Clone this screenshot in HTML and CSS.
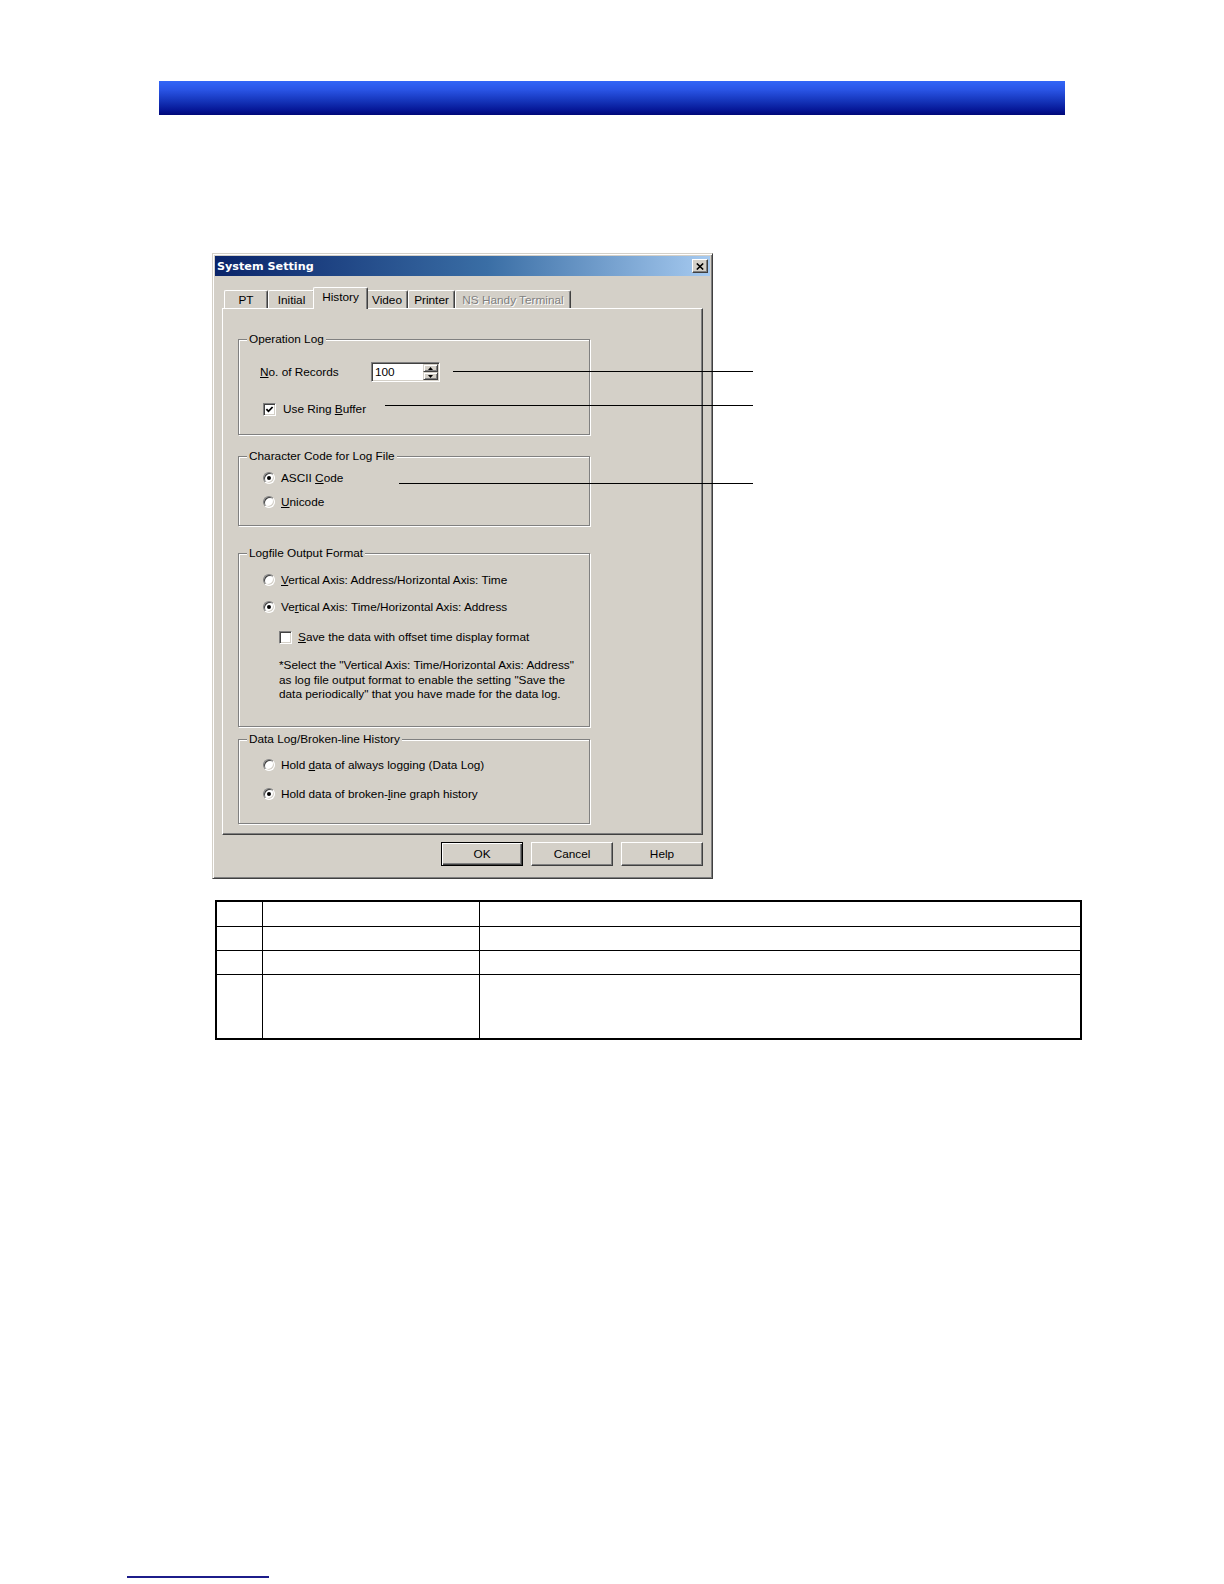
FILE: index.html
```html
<!DOCTYPE html>
<html>
<head>
<meta charset="utf-8">
<title>System Setting - History</title>
<link rel="stylesheet" href="styles.css">
</head>
<body>
<div class="page">
  <div class="topbar"></div>

  <div class="figure">
    <div class="dialog">
      <div class="titlebar">
        <span class="title">System Setting</span>
        <span class="close"><svg width="8" height="7" viewBox="0 0 8 7"><path d="M0.8 0.5 L7.2 6.5 M7.2 0.5 L0.8 6.5" stroke="#000" stroke-width="1.6" fill="none"/></svg></span>
      </div>

      <div class="tabs">
        <div class="tab t-pt">PT</div>
        <div class="tab t-init">Initial</div>
        <div class="tab t-hist selected">History</div>
        <div class="tab t-video">Video</div>
        <div class="tab t-print">Printer</div>
        <div class="tab t-ns disabled">NS Handy Terminal</div>
      </div>

      <div class="panel">
        <div class="group g-op">
          <span class="legend">Operation Log</span>
          <div class="row">
            <span class="lbl"><u>N</u>o. of Records</span>
            <div class="spin">
              <span class="spin-val">100</span>
              <div class="spin-btns">
                <span class="spin-btn"><svg width="5" height="3" viewBox="0 0 5 3"><path d="M2.5 0 L5 3 L0 3 Z" fill="#000"/></svg></span>
                <span class="spin-btn"><svg width="5" height="3" viewBox="0 0 5 3"><path d="M0 0 L5 0 L2.5 3 Z" fill="#000"/></svg></span>
              </div>
            </div>
          </div>
          <div class="row r-ring">
            <span class="check op-check"><svg width="9" height="9" viewBox="0 0 9 9"><path d="M1.4 4.1 L3.5 6.3 L7.6 2" stroke="#000" stroke-width="1.8" fill="none"/></svg></span>
            <span class="txt-check">Use Ring <u>B</u>uffer</span>
          </div>
        </div>

        <div class="group g-char">
          <span class="legend">Character Code for Log File</span>
          <div class="row">
            <span class="radio on"></span><span class="txt-radio">ASCII <u>C</u>ode</span>
          </div>
          <div class="row r-uni">
            <span class="radio"></span><span class="txt-radio"><u>U</u>nicode</span>
          </div>
        </div>

        <div class="group g-log">
          <span class="legend">Logfile Output Format</span>
          <div class="row">
            <span class="radio"></span><span class="txt-radio"><u>V</u>ertical Axis: Address/Horizontal Axis: Time</span>
          </div>
          <div class="row r-log2">
            <span class="radio on"></span><span class="txt-radio">Ve<u>r</u>tical Axis: Time/Horizontal Axis: Address</span>
          </div>
          <div class="row r-log3">
            <span class="check log-check"></span><span class="txt-radio"><u>S</u>ave the data with offset time display format</span>
          </div>
          <p class="note">*Select the "Vertical Axis: Time/Horizontal Axis: Address"<br>as log file output format to enable the setting "Save the<br>data periodically" that you have made for the data log.</p>
        </div>

        <div class="group g-data">
          <span class="legend">Data Log/Broken-line History</span>
          <div class="row">
            <span class="radio"></span><span class="txt-radio">Hold <u>d</u>ata of always logging (Data Log)</span>
          </div>
          <div class="row r-data2">
            <span class="radio on"></span><span class="txt-radio">Hold data of broken-<u>l</u>ine graph history</span>
          </div>
        </div>
      </div>

      <div class="buttons">
        <div class="btn default">OK</div>
        <div class="btn">Cancel</div>
        <div class="btn">Help</div>
      </div>
    </div>

    <div class="callout c1"></div>
    <div class="callout c2"></div>
    <div class="callout c3"></div>
  </div>

  <table class="spec">
    <colgroup><col class="c-no"><col class="c-item"><col class="c-desc"></colgroup>
    <tr class="r1"><td></td><td></td><td></td></tr>
    <tr class="r2"><td></td><td></td><td></td></tr>
    <tr class="r3"><td></td><td></td><td></td></tr>
    <tr class="r4"><td></td><td></td><td></td></tr>
  </table>

  <div class="footline"></div>
</div>
</body>
</html>
```

FILE: styles.css
```css
* { box-sizing: border-box; }

html, body {
  margin: 0;
  padding: 0;
  background: #fff;
}

body {
  font-family: "Liberation Sans", Arial, sans-serif;
  color: #000;
}

.page {
  width: 1224px;
  height: 1584px;
  padding-top: 81px;
  overflow: hidden;
}

.topbar {
  margin-left: 159px;
  width: 906px;
  height: 34px;
  background: linear-gradient(180deg, #3266f7 0%, #2a55e6 25%, #1433b8 60%, #061797 85%, #000878 100%);
}

/* ---------- figure ---------- */
.figure {
  position: relative;
  margin: 138px 0 0 212px;
  width: 545px;
}

.dialog {
  width: 501px;
  height: 626px;
  background: #d4d0c8;
  border: 1px solid;
  border-color: #d4d0c8 #404040 #404040 #d4d0c8;
  box-shadow: inset 1px 1px #fff, inset -1px -1px #808080;
  padding: 2px;
  display: flex;
  flex-direction: column;
}

.titlebar {
  height: 20px;
  background: linear-gradient(90deg, #0a246a 0%, #3a6ea5 55%, #a6caf0 100%);
  display: flex;
  align-items: center;
  justify-content: space-between;
  padding: 0 2px 0 2px;
}

.title {
  color: #fff;
  font-family: "DejaVu Sans", Verdana, sans-serif;
  font-weight: bold;
  font-size: 11.2px;
}

.close {
  width: 16px;
  height: 14px;
  background: #d4d0c8;
  border: 1px solid;
  border-color: #fff #404040 #404040 #fff;
  box-shadow: inset -1px -1px #808080;
  display: flex;
  align-items: center;
  justify-content: center;
}

/* ---------- tabs ---------- */
.tabs {
  position: relative;
  z-index: 1;
  margin: 10px 0 0 7px;
  height: 22px;
  display: flex;
  align-items: flex-end;
  padding-left: 2px;
}

.tab {
  height: 18px;
  background: #d4d0c8;
  border: 1px solid;
  border-bottom: none;
  border-color: #fff #404040 #404040 #fff;
  box-shadow: inset -1px 0 #808080;
  border-radius: 2px 2px 0 0;
  font-size: 11.8px;
  display: flex;
  align-items: center;
  justify-content: center;
  padding-top: 1px;
  white-space: nowrap;
}

.t-pt { width: 44px; }
.t-init { width: 47px; }
.t-video { width: 42px; }
.t-print { width: 47px; }
.t-ns { width: 116px; }

.tab.selected {
  position: relative;
  z-index: 2;
  width: 55px;
  height: 22px;
  margin: 0 -2px -1px -2px;
  padding-top: 0;
  padding-bottom: 3px;
}

.tab.disabled {
  color: #808080;
  text-shadow: 1px 1px #fff;
}

/* ---------- panel ---------- */
.panel {
  margin-left: 7px;
  width: 481px;
  height: 527px;
  border: 1px solid;
  border-color: #fff #404040 #404040 #fff;
  box-shadow: inset -1px -1px #808080;
  padding: 30px 0 0 15px;
}

.group {
  position: relative;
  width: 352px;
  border: 1px solid #808080;
  box-shadow: inset 1px 1px #fff, 1px 1px #fff;
  padding-left: 21px;
}

.legend {
  position: absolute;
  top: -8px;
  left: 8px;
  padding: 0 2px;
  background: #d4d0c8;
  font-size: 11.8px;
  line-height: 14px;
  white-space: nowrap;
}

.row {
  height: 20px;
  display: flex;
  align-items: center;
  font-size: 11.8px;
  white-space: nowrap;
}

.g-op { height: 96px; padding-top: 22px; }
.r-ring { margin-top: 17px; }

.g-char { height: 70px; margin-top: 21px; padding-top: 11px; }
.r-uni { margin-top: 4px; }

.g-log { height: 174px; margin-top: 27px; padding-top: 16px; }
.r-log2 { margin-top: 7px; }
.r-log3 { margin-top: 10px; }

.g-data { height: 85px; margin-top: 12px; padding-top: 15px; }
.r-data2 { margin-top: 9px; }

.lbl { width: 111px; }

.spin {
  width: 69px;
  height: 20px;
  background: #fff;
  border: 1px solid;
  border-color: #808080 #fff #fff #808080;
  box-shadow: inset 1px 1px #404040, inset -1px -1px #d4d0c8;
  display: flex;
  align-items: center;
  justify-content: space-between;
  padding: 1px;
}

.spin-val {
  padding-left: 2px;
  font-size: 11.8px;
}

.spin-btns {
  width: 15px;
  height: 16px;
  display: flex;
  flex-direction: column;
}

.spin-btn {
  flex: 1;
  background: #d4d0c8;
  border: 1px solid;
  border-color: #d4d0c8 #404040 #404040 #d4d0c8;
  box-shadow: inset 1px 1px #fff, inset -1px -1px #808080;
  display: flex;
  align-items: center;
  justify-content: center;
}

.radio {
  position: relative;
  flex: none;
  width: 12px;
  height: 12px;
  margin-left: 3px;
  border-radius: 50%;
  background: #fff;
  border: 1px solid;
  border-color: #808080 #fff #fff #808080;
  box-shadow: inset 1px 1px #404040, inset -1px -1px #d4d0c8;
}

.radio.on::after {
  content: "";
  position: absolute;
  left: 3px;
  top: 3px;
  width: 4px;
  height: 4px;
  border-radius: 50%;
  background: #000;
}

.txt-radio { margin-left: 6px; }
.txt-check { margin-left: 7px; }

.check {
  flex: none;
  width: 13px;
  height: 13px;
  background: #fff;
  border: 1px solid;
  border-color: #808080 #fff #fff #808080;
  box-shadow: inset 1px 1px #404040, inset -1px -1px #d4d0c8;
  display: flex;
  align-items: center;
  justify-content: center;
}

.op-check { margin-left: 3px; }
.log-check { margin-left: 19px; }

.note {
  margin: 11px 0 0 19px;
  font-size: 11.8px;
  line-height: 14.5px;
  white-space: nowrap;
}

/* ---------- buttons ---------- */
.buttons {
  display: flex;
  justify-content: flex-end;
  gap: 8px;
  margin-top: 7px;
  padding-right: 7px;
}

.btn {
  width: 82px;
  height: 24px;
  border: 1px solid;
  border-color: #fff #404040 #404040 #fff;
  box-shadow: inset -1px -1px #808080;
  font-size: 11.8px;
  display: flex;
  align-items: center;
  justify-content: center;
}

.btn.default {
  border-color: #000;
  box-shadow: inset 1px 1px #fff, inset -1px -1px #404040, inset -2px -2px #808080;
}

/* ---------- callout lines ---------- */
.callout {
  position: absolute;
  height: 1px;
  background: #000;
}

.c1 { left: 241px; top: 118px; width: 300px; }
.c2 { left: 173px; top: 152px; width: 368px; }
.c3 { left: 187px; top: 230px; width: 354px; }

/* ---------- table ---------- */
.spec {
  margin: 21px 0 0 215px;
  width: 865px;
  border-collapse: collapse;
  border: 2px solid #000;
  table-layout: fixed;
}

.spec td {
  border: 1px solid #000;
  padding: 0;
}

.c-no { width: 46px; }
.c-item { width: 217px; }
.c-desc { width: 602px; }

.spec .r1 td { height: 25px; }
.spec .r2 td { height: 24px; }
.spec .r3 td { height: 24px; }
.spec .r4 td { height: 65px; }

.footline {
  margin: 536px 0 0 127px;
  width: 142px;
  height: 2px;
  background: #1c1c8a;
}
```
